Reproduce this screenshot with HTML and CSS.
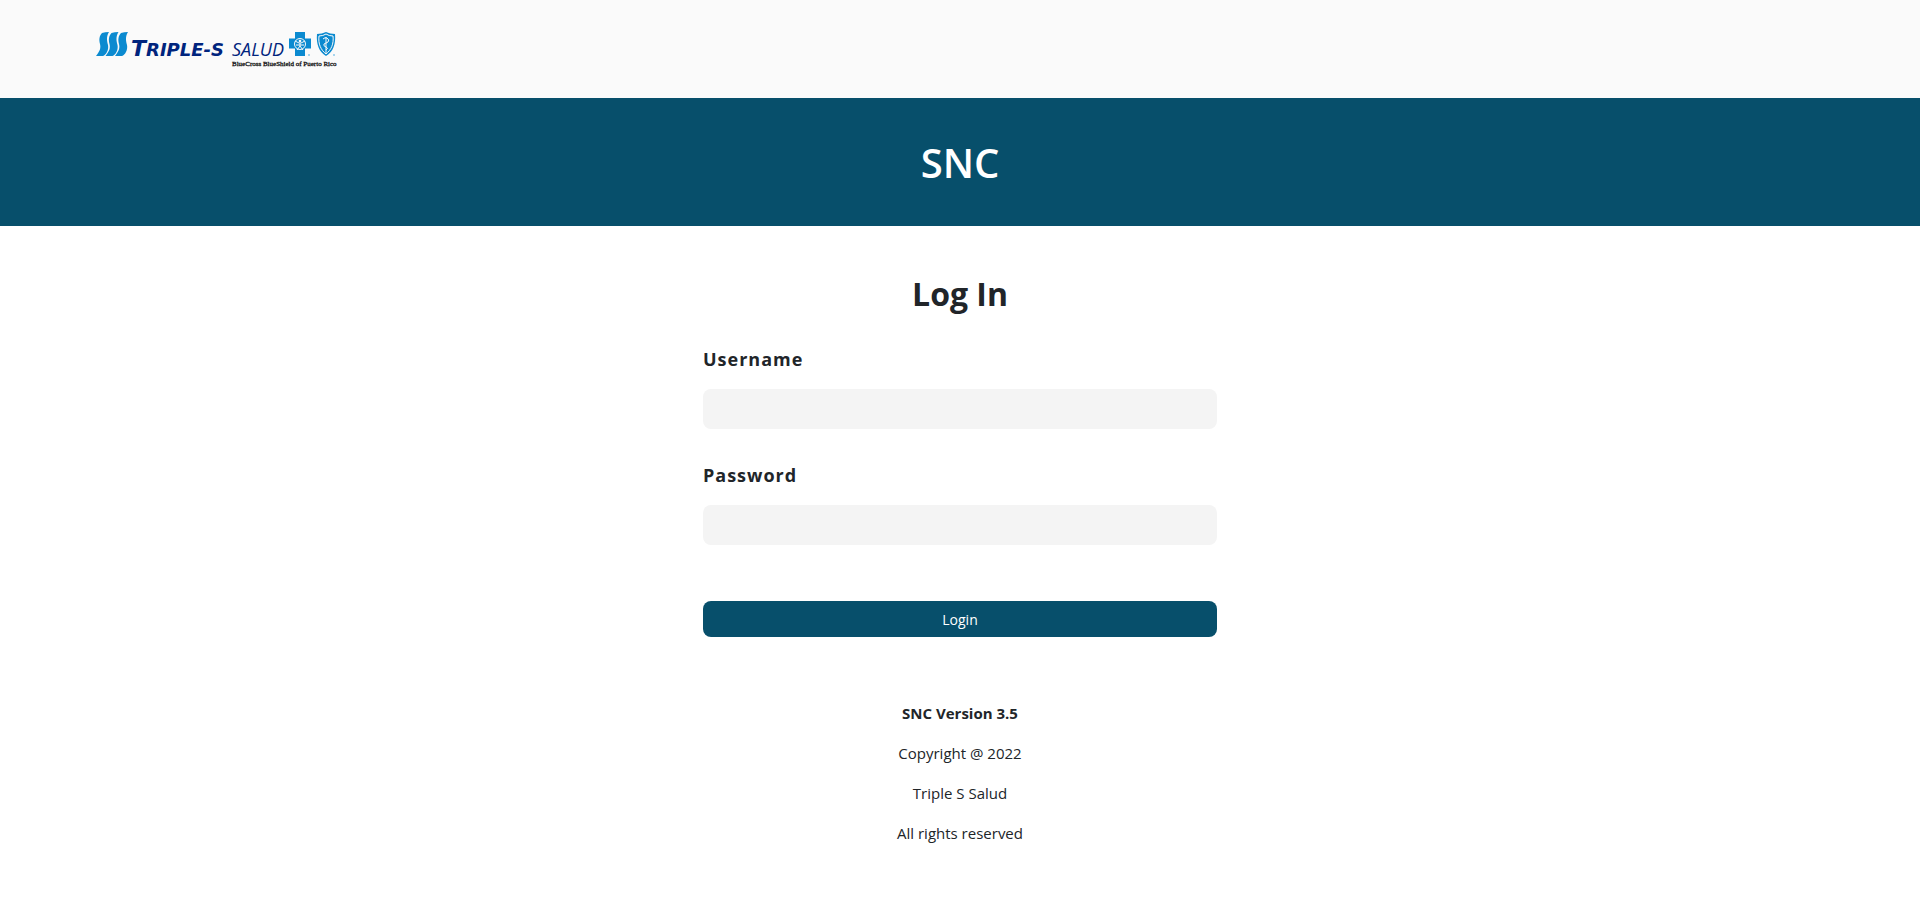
FILE: index.html
```
<!DOCTYPE html>
<html lang="en">

<head>
  <meta charset="UTF-8">
  <meta name="viewport" content="width=device-width, initial-scale=1.0">
  <title>SNC</title>
  <link rel="stylesheet" href="styles.css">
</head>

<body>
  <header class="header">
    <svg class="logo" viewBox="0 0 242 36" role="img" aria-label="Triple-S Salud">
      <!-- waves -->
      <g fill="#0b8ad0">
        <path id="wave" d="M6 1Q9 0 13 0C10 5 11 9 12 13C13 18 10 23 7 24H0C4 19 5 16 4 12C3 8 3 4 6 1Z" />
        <use href="#wave" x="9.500" />
        <use href="#wave" x="19" />
      </g>
      <!-- name -->
      <text class="logo-name" x="35" y="24">T<tspan class="logo-caps">RIPLE-S</tspan></text>
      <text class="logo-salud" x="136" y="24">SALUD</text>
      <text class="logo-tagline" x="136" y="34">BlueCross BlueShield of Puerto Rico</text>
      <!-- cross -->
      <path d="M199 0h10v6.500h6v10h-6v7.500h-10v-7.500h-6v-10h6z" fill="#0b8ad0" />
      <circle cx="204" cy="12" r="5.500" fill="none" stroke="#fafafa" stroke-width="1" />
      <path d="M199 9l4 2h2l4-2M204 11v3l-3 4M204 14l3 4M200 13h8" fill="none" stroke="#fafafa" stroke-width="1" />
      <circle cx="204" cy="9" r="1.300" fill="#fafafa" />
      <circle cx="213" cy="23" r="1" fill="#8cc8ea" />
      <!-- shield -->
      <path d="M221 2Q226 2 230 0Q234 2 239 2C240 12 237 20 230 24C223 20 220 12 221 2Z" fill="#0b8ad0" />
      <path d="M223 4Q227 4 230 2Q233 4 237 4C238 12 235 18 230 22C225 18 222 12 223 4Z" fill="none" stroke="#fafafa" stroke-width="1" />
      <path d="M230 5V21M227 7Q229 5 231 6Q234 8 232 10L228 12Q227 14 230 15Q233 16 230 18" fill="none" stroke="#fafafa" stroke-width="1" />
      <circle cx="238" cy="23" r="1" fill="#8cc8ea" />
    </svg>
  </header>

  <div class="banner">
    <h1>SNC</h1>
  </div>

  <main class="container">
    <h2>Log In</h2>
    <form class="login-form">
      <label for="username">Username</label>
      <input type="text" id="username" name="username">
      <label for="password">Password</label>
      <input type="password" id="password" name="password">
      <button type="submit" class="btn-login">Login</button>
    </form>
  </main>

  <footer class="footer">
    <p><b>SNC Version 3.5</b></p>
    <p>Copyright @ 2022</p>
    <p>Triple S Salud</p>
    <p>All rights reserved</p>
  </footer>
</body>

</html>
```

FILE: styles.css
```
* {
  margin: 0;
  padding: 0;
  box-sizing: border-box;
}

body {
  font-family: "Segoe UI", "Open Sans", "Noto Sans", sans-serif;
  font-size: 15px;
  line-height: 24px;
  color: #212529;
  background-color: #fff;
}

.header {
  background-color: #fafafa;
  padding: 32px 5% 30px;
}

.logo {
  display: block;
  width: 242px;
  height: 36px;
}

.logo-name {
  font-family: "DejaVu Sans", sans-serif;
  font-size: 22px;
  font-weight: bold;
  font-style: italic;
  fill: #00247d;
}

.logo-caps {
  font-size: 18px;
}

.logo-salud {
  font-size: 18px;
  font-style: italic;
  fill: #00247d;
}

.logo-tagline {
  font-family: "Liberation Serif", serif;
  font-size: 7px;
  fill: #111;
  stroke: #111;
  stroke-width: 0.3;
}

.banner {
  background-color: #074f6b;
  color: #fff;
  padding: 41px 0 39px;
  text-align: center;
}

.banner h1 {
  font-size: 40px;
  font-weight: 600;
  line-height: 48px;
}

.container {
  max-width: 514px;
  margin: 0 auto;
  padding-top: 48px;
}

.container h2 {
  font-size: 32px;
  font-weight: bold;
  line-height: 40px;
  text-align: center;
  margin-bottom: 32px;
}

.login-form label {
  display: block;
  font-size: 18px;
  font-weight: bold;
  letter-spacing: 1px;
  line-height: 27px;
  margin-bottom: 16px;
}

.login-form input {
  display: block;
  width: 100%;
  height: 40px;
  border: none;
  border-radius: 8px;
  background-color: #f4f4f4;
  padding: 8px 16px;
  font: inherit;
  margin-bottom: 33px;
}

.btn-login {
  display: block;
  width: 100%;
  height: 36px;
  margin-top: 56px;
  border: none;
  border-radius: 8px;
  background-color: #074f6b;
  color: #fff;
  font-family: inherit;
  font-size: 14px;
}

.footer {
  padding: 64px 0 48px;
  text-align: center;
}

.footer p {
  margin-bottom: 16px;
}
```
